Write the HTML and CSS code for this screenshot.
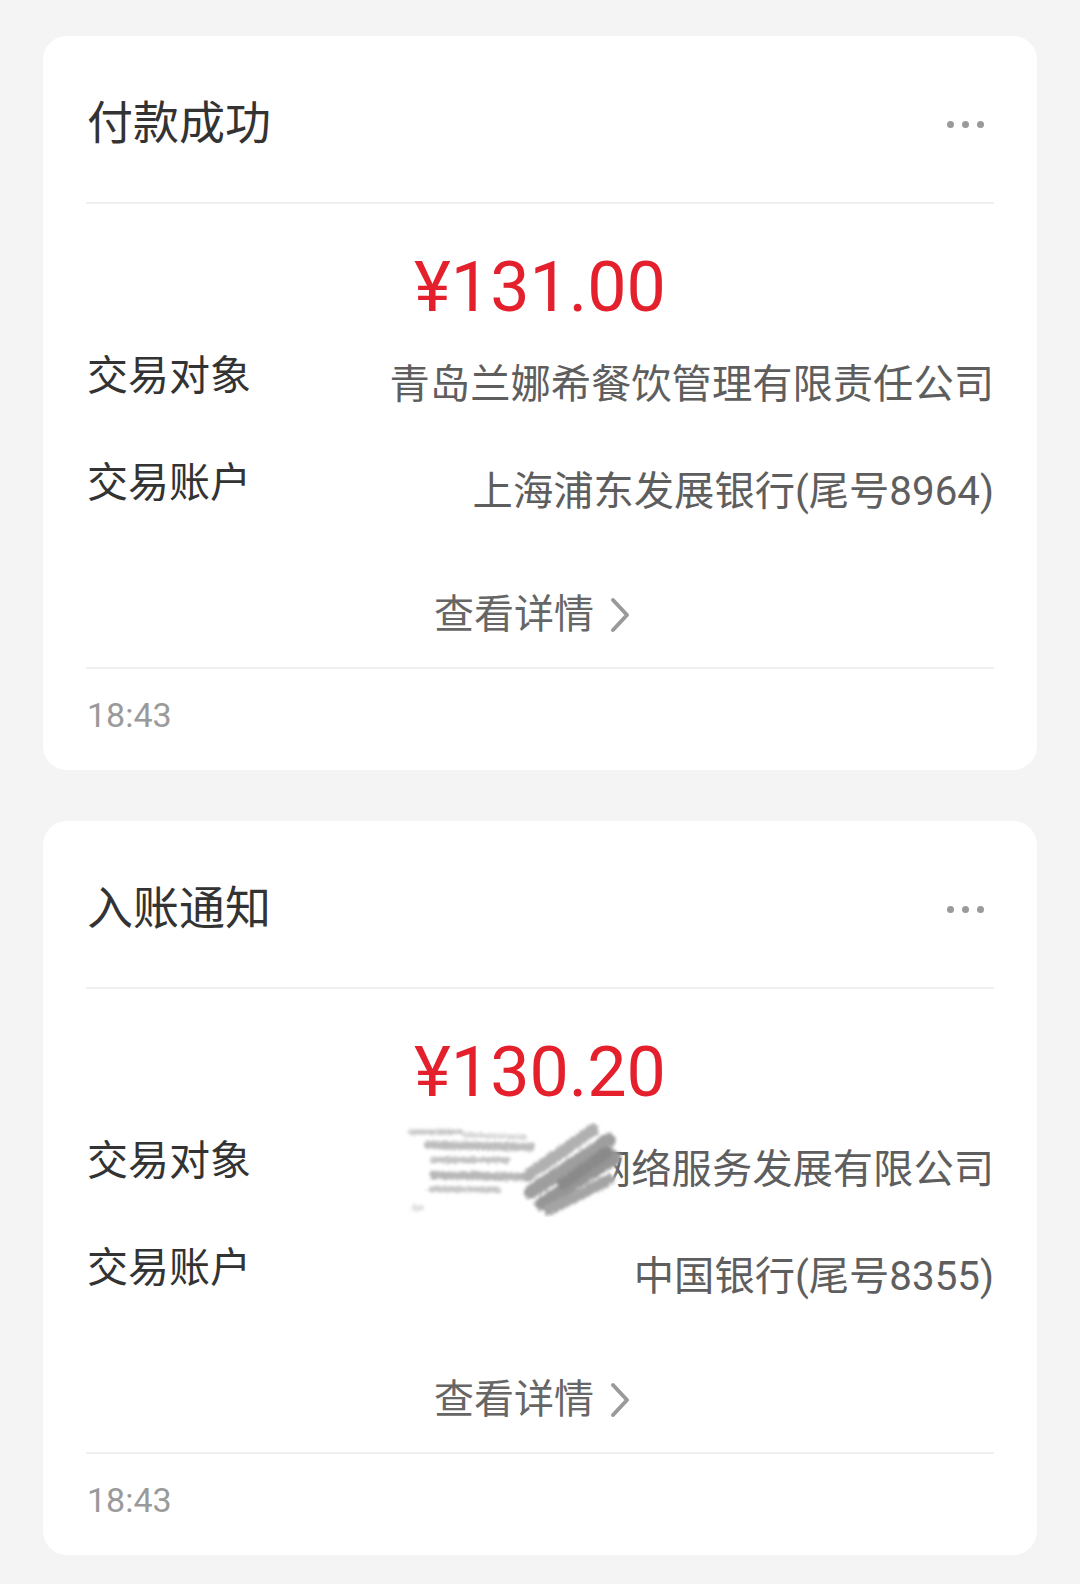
FILE: index.html
```html
<!DOCTYPE html>
<html lang="zh-CN">
<head>
    <meta charset="UTF-8">
    <meta name="viewport" content="width=device-width, initial-scale=1.0">
    <title>交易通知</title>
    <link rel="stylesheet" href="styles.css">
</head>
<body>
    <div class="page">
        <!-- Cartão 1: pagamento -->
        <div class="card">
            <div class="card-head">
                <h2 class="card-title">付款成功</h2>
                <span class="more"><i></i><i></i><i></i></span>
            </div>
            <div class="card-body">
                <div class="amount">¥131.00</div>
                <div class="info-list">
                    <div class="info-row">
                        <span class="info-label">交易对象</span>
                        <span class="info-value">青岛兰娜希餐饮管理有限责任公司</span>
                    </div>
                    <div class="info-row">
                        <span class="info-label">交易账户</span>
                        <span class="info-value">上海浦东发展银行(尾号8964)</span>
                    </div>
                </div>
                <div class="detail-link">
                    <span>查看详情</span>
                    <svg class="chevron" width="22" height="36" viewBox="0 0 22 36"><polyline points="4,3 18,18 4,33" fill="none" stroke="#9a9a9a" stroke-width="4" stroke-linecap="round" stroke-linejoin="round"/></svg>
                </div>
            </div>
            <div class="card-foot">18:43</div>
        </div>

        <!-- Cartão 2: entrada -->
        <div class="card">
            <div class="card-head">
                <h2 class="card-title">入账通知</h2>
                <span class="more"><i></i><i></i><i></i></span>
            </div>
            <div class="card-body">
                <div class="amount">¥130.20</div>
                <div class="info-list">
                    <div class="info-row">
                        <span class="info-label">交易对象</span>
                        <span class="info-value">网络服务发展有限公司</span>
                        <!-- rabisco que esconde o nome -->
                        <svg class="smudge" width="220" height="95" viewBox="0 0 220 95">
                            <defs>
                                <filter id="rough" x="-10%" y="-20%" width="120%" height="140%">
                                    <feTurbulence type="fractalNoise" baseFrequency="0.9 0.25" numOctaves="2" seed="3" result="noise"/>
                                    <feDisplacementMap in="SourceGraphic" in2="noise" scale="7" xChannelSelector="R" yChannelSelector="G" result="moved"/>
                                    <feGaussianBlur in="moved" stdDeviation="1.8"/>
                                </filter>
                                <filter id="soft">
                                    <feGaussianBlur stdDeviation="3"/>
                                </filter>
                            </defs>
                            <rect x="150" y="12" width="60" height="60" fill="#fff" filter="url(#soft)"/>
                            <g filter="url(#rough)" stroke-linecap="round" fill="none">
                                <path d="M8 10 L58 10" stroke="#c8c8c8" stroke-width="5"/>
                                <path d="M60 13 L122 15" stroke="#d8d8d8" stroke-width="5"/>
                                <path d="M25 23 L128 25" stroke="#bdbdbd" stroke-width="8"/>
                                <path d="M30 38 L104 38" stroke="#c4c4c4" stroke-width="6"/>
                                <path d="M30 53 L116 55" stroke="#b8b8b8" stroke-width="8"/>
                                <path d="M28 67 L95 68" stroke="#c8c8c8" stroke-width="6"/>
                                <path d="M12 86 L18 86" stroke="#e0e0e0" stroke-width="6"/>
                                <path d="M124 54 L190 8" stroke="#b0b0b0" stroke-width="12"/>
                                <path d="M128 70 L206 18" stroke="#9e9e9e" stroke-width="14"/>
                                <path d="M138 82 L212 36" stroke="#969696" stroke-width="13"/>
                                <path d="M146 88 L205 58" stroke="#a4a4a4" stroke-width="11"/>
                                <path d="M160 62 L204 30" stroke="#8a8a8a" stroke-width="12"/>
                            </g>
                        </svg>
                    </div>
                    <div class="info-row">
                        <span class="info-label">交易账户</span>
                        <span class="info-value">中国银行(尾号8355)</span>
                    </div>
                </div>
                <div class="detail-link">
                    <span>查看详情</span>
                    <svg class="chevron" width="22" height="36" viewBox="0 0 22 36"><polyline points="4,3 18,18 4,33" fill="none" stroke="#9a9a9a" stroke-width="4" stroke-linecap="round" stroke-linejoin="round"/></svg>
                </div>
            </div>
            <div class="card-foot">18:43</div>
        </div>
    </div>
</body>
</html>
```

FILE: styles.css
```css
/* Corpo da página */
body {
    margin: 0;
    background-color: #f4f4f4;
    font-family: Roboto, "Noto Sans CJK SC", sans-serif;
    color: #333;
}

.page {
    padding: 36px 43px 0;
}

/* Cartão */
.card {
    background-color: #fff;
    border-radius: 24px;
    padding: 0 43px;
    margin-bottom: 51px;
}

/* Cabeçalho do cartão */
.card-head {
    height: 166px;
    display: flex;
    align-items: center;
    justify-content: space-between;
    border-bottom: 2px solid #efefef;
}

.card-title {
    margin: 0;
    font-family: "Noto Sans CJK SC", sans-serif;
    font-size: 46px;
    font-weight: normal;
    line-height: 46px;
    color: #333;
    padding-left: 1px;
}

.more {
    display: flex;
    gap: 8px;
    margin-right: 10px;
    margin-top: 10px;
}

.more i {
    width: 7px;
    height: 7px;
    border-radius: 50%;
    background-color: #9a9a9a;
}

/* Corpo do cartão */
.card-body {
    padding: 48px 0 32px;
}

.amount {
    text-align: center;
    font-family: Roboto, sans-serif;
    font-size: 70px;
    line-height: 70px;
    color: #e3202b;
}

.info-list {
    margin-top: 34px;
    display: flex;
    flex-direction: column;
    gap: 58px;
}

.info-row {
    position: relative;
    display: flex;
    align-items: flex-start;
}

.info-label {
    flex: none;
    font-size: 41px;
    line-height: 40px;
    color: #333;
    padding-left: 1px;
}

.info-value {
    flex: 1;
    text-align: right;
    font-size: 40.3px;
    line-height: 40px;
    padding-top: 9px;
    color: #5e5e5e;
}

/* Rabisco por cima do nome */
.smudge {
    position: absolute;
    left: 317px;
    top: -19px;
}

/* Link "查看详情" */
.detail-link {
    margin-top: 83px;
    display: flex;
    justify-content: center;
    align-items: center;
    padding-right: 15px;
    font-size: 40px;
    line-height: 40px;
    color: #666;
}

.chevron {
    margin-left: 15px;
}

/* Rodapé com a hora */
.card-foot {
    border-top: 2px solid #efefef;
    padding: 29px 0 38px 1px;
    font-family: Roboto, sans-serif;
    font-size: 34px;
    line-height: 34px;
    color: #9a9a9a;
}
```
